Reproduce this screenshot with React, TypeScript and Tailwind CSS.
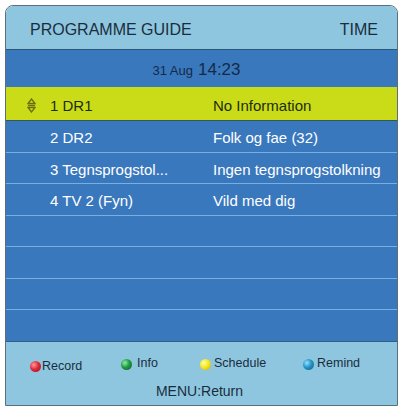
import React from "react";

const font = { fontFamily: '"Liberation Sans", Arial, sans-serif' };

function Dot({ c }: { c: string }) {
  const cls: Record<string, string> = {
    red: "bg-[radial-gradient(circle_at_35%_35%,#ff9a9a_0%,#e02a3a_45%,#9a1020_100%)]",
    green: "bg-[radial-gradient(circle_at_35%_35%,#8ef0a0_0%,#1f9a45_45%,#0d5a25_100%)]",
    yellow: "bg-[radial-gradient(circle_at_35%_35%,#ffffa0_0%,#f2e41a_50%,#c8a010_100%)]",
    blue: "bg-[radial-gradient(circle_at_35%_35%,#9ae0ff_0%,#2396c8_45%,#0e5a80_100%)]",
  };
  return <span className={`inline-block w-[11px] h-[11px] rounded-full shrink-0 ${cls[c]}`} />;
}

export default function App() {
  const rows = [
    ["2 DR2", "Folk og fae (32)"],
    ["3 Tegnsprogstol...", "Ingen tegnsprogstolkning"],
    ["4 TV 2 (Fyn)", "Vild med dig"],
    ["", ""],
    ["", ""],
    ["", ""],
    ["", ""],
  ];
  return (
    <div className="w-[401px] h-[409px] bg-white pt-[5px] pl-[5px]" style={font}>
      <div className="w-[393px] h-[401px] border border-[#5b6e7c] rounded-t-[8px] overflow-hidden flex flex-col">
        <div className="h-[44px] shrink-0 bg-[#8ec6df] border-b border-[#2c5878] flex items-center justify-between pl-[24px] pr-[19px] pt-[4px] text-[16px] text-[#1b2d3d]">
          <span>PROGRAMME GUIDE</span>
          <span>TIME</span>
        </div>
        <div className="h-[37px] shrink-0 bg-[#3a78bd] flex items-center justify-center pr-[10px] pt-[2px] text-[#142a48] gap-[5px]">
          <span className="text-[13px] pt-[2px]">31 Aug</span>
          <span className="text-[17px]">14:23</span>
        </div>
        <div className="h-[34px] shrink-0 bg-[#c9dc17] border-b border-[#2f5a58] flex items-center text-[15px] text-[#1e2c10] relative">
          <svg className="absolute left-[21px] top-[11px]" width="9" height="15" viewBox="0 0 9 15">
            <path d="M4.5 1 L8 5.5 L1 5.5 Z" fill="none" stroke="#6e6e10" strokeWidth="1.4" />
            <path d="M1 7.5 L8 7.5" stroke="#6e6e10" strokeWidth="1.4" />
            <path d="M1 9.5 L8 9.5 L4.5 14 Z" fill="none" stroke="#6e6e10" strokeWidth="1.4" />
          </svg>
          <span className="pl-[44px] w-[207px] pt-[5px]">1 DR1</span>
          <span className="pt-[5px]">No Information</span>
        </div>
        <div className="h-[220px] shrink-0 flex flex-col bg-[#3a78bd]">
          {rows.map((r, i) => (
            <div
              key={i}
              className={`flex-1 flex items-center text-[15px] text-white ${i > 0 ? "border-t border-[#78aee2]" : ""}`}
            >
              <span className="pl-[44px] w-[207px] pt-[4px]">{r[0]}</span>
              <span className="pt-[4px]">{r[1]}</span>
            </div>
          ))}
        </div>
        <div className="flex-1 bg-[#8ec6df] border-t border-[#2f5f86] flex flex-col text-[#1b2d3d]">
          <div className="flex items-center pl-[24px] pt-[14px] text-[12.5px] h-[31px]">
            <div className="w-[91px] flex items-center gap-[1px] pt-[3px]">
              <Dot c="red" />
              <span>Record</span>
            </div>
            <div className="w-[79px] flex items-center gap-[5px]">
              <Dot c="green" />
              <span className="-mt-[3px]">Info</span>
            </div>
            <div className="w-[103px] flex items-center gap-[3px]">
              <Dot c="yellow" />
              <span className="-mt-[3px]">Schedule</span>
            </div>
            <div className="flex items-center gap-[3px]">
              <Dot c="blue" />
              <span className="-mt-[3px]">Remind</span>
            </div>
          </div>
          <div className="flex justify-center pt-[8px] text-[14px] pr-[4px]">MENU:Return</div>
        </div>
      </div>
    </div>
  );
}
